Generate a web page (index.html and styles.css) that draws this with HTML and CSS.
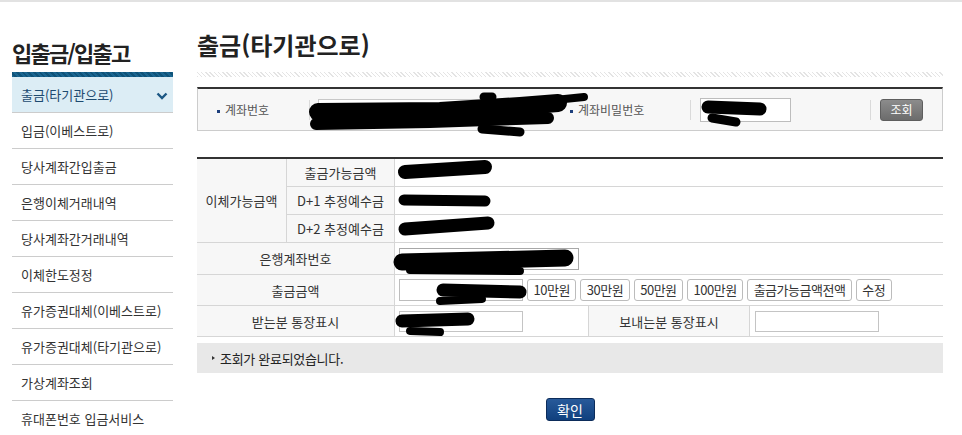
FILE: index.html
```html
<!DOCTYPE html>
<html lang="ko">
<head>
  <meta charset="UTF-8">
  <title>출금(타기관으로)</title>
  <link rel="stylesheet" href="styles.css">
</head>
<body>
  <div class="page">
    <div class="sidebar">
      <h2 class="side-title">입출금/입출고</h2>
      <div class="side-bar"></div>
      <ul class="menu">
        <li class="active">출금(타기관으로)
          <svg class="chev" width="12" height="8" viewBox="0 0 12 8"><path d="M1.5 1.5 L6 6 L10.5 1.5" fill="none" stroke="#1b5784" stroke-width="2.4"/></svg>
        </li>
        <li>입금(이베스트로)</li>
        <li>당사계좌간입출금</li>
        <li>은행이체거래내역</li>
        <li>당사계좌간거래내역</li>
        <li>이체한도정정</li>
        <li>유가증권대체(이베스트로)</li>
        <li>유가증권대체(타기관으로)</li>
        <li>가상계좌조회</li>
        <li>휴대폰번호 입금서비스</li>
      </ul>
    </div>

    <div class="main">
      <h1 class="title">출금(타기관으로)</h1>
      <div class="dots"></div>

      <div class="search-box">
        <span class="s-label first">계좌번호</span>
        <span class="s-div"></span>
        <input type="text" class="inp acct">
        <span class="s-label second">계좌비밀번호</span>
        <span class="s-div"></span>
        <input type="password" class="inp pw">
        <span class="s-div push"></span>
        <button class="btn-search">조회</button>
      </div>

      <div class="grid">
        <div class="c lbl span3">이체가능금액</div>
        <div class="c lbl sub">출금가능금액</div>
        <div class="c val wide"></div>
        <div class="c lbl sub">D+1 추정예수금</div>
        <div class="c val wide"></div>
        <div class="c lbl sub">D+2 추정예수금</div>
        <div class="c val wide"></div>

        <div class="c lbl both">은행계좌번호</div>
        <div class="c val wide">
          <div class="select">
            <svg width="9" height="7" viewBox="0 0 9 7"><path d="M1 1.5 L4.5 5 L8 1.5" fill="none" stroke="#000" stroke-width="1.6"/></svg>
          </div>
        </div>

        <div class="c lbl both">출금금액</div>
        <div class="c val wide">
          <input type="text" class="inp amount">
          <button class="btn-amt">10만원</button>
          <button class="btn-amt">30만원</button>
          <button class="btn-amt">50만원</button>
          <button class="btn-amt">100만원</button>
          <button class="btn-amt">출금가능금액전액</button>
          <button class="btn-amt">수정</button>
        </div>

        <div class="c lbl both">받는분 통장표시</div>
        <div class="c val"><input type="text" class="inp memo"></div>
        <div class="c lbl">보내는분 통장표시</div>
        <div class="c val last"><input type="text" class="inp memo"></div>
      </div>

      <div class="message"><span class="tri"></span>조회가 완료되었습니다.</div>

      <div class="actions">
        <button class="btn-ok">확인</button>
      </div>
    </div>
  </div>

  <!-- masked personal data in the original capture -->
  <svg class="mask" width="962" height="435" viewBox="0 0 962 435">
    <g fill="none" stroke="#000" stroke-linecap="round" stroke-linejoin="round">
      <path d="M318 112 L440 111 L520 106 L558 103" stroke-width="18"/>
      <path d="M545 101 L584 97" stroke-width="8"/>
      <path d="M316 124 L430 122 L548 118" stroke-width="12"/>
      <path d="M482 129 L520 132" stroke-width="9"/>
      <path d="M484 97 L492 97" stroke-width="9"/>
      <path d="M708 107 L760 109" stroke-width="13"/>
      <path d="M712 118 L736 122" stroke-width="9"/>
      <path d="M405 172 L485 167" stroke-width="14"/>
      <path d="M404 200 L485 201" stroke-width="11"/>
      <path d="M405 229 L488 223" stroke-width="13"/>
      <path d="M402 262 L565 258" stroke-width="17"/>
      <path d="M410 270 L520 271" stroke-width="8"/>
      <path d="M443 290 L520 292" stroke-width="13"/>
      <path d="M440 301 L482 299" stroke-width="8"/>
      <path d="M402 321 L468 319" stroke-width="13"/>
      <path d="M410 331 L440 332" stroke-width="8"/>
    </g>
  </svg>
</body>
</html>
```

FILE: styles.css
```css
body {
  margin: 0;
  border-top: 2px solid #e2e2e2;
  font-family: "Noto Sans CJK KR", "Noto Sans", sans-serif;
  color: #333;
  background: #fff;
  position: relative;
}
.page {
  display: flex;
  gap: 24px;
  padding-left: 12px;
}

/* sidebar */
.sidebar {
  width: 161px;
}
.side-title {
  margin: 35px 0 5px;
  font-size: 22px;
  line-height: 30px;
  letter-spacing: -1.8px;
  font-weight: bold;
  color: #222;
}
.side-bar {
  height: 5px;
  background: repeating-linear-gradient(45deg, #1a6590 0 2px, #0f5379 2px 4px);
}
.menu {
  list-style: none;
  margin: 0;
  padding: 0;
}
.menu li {
  height: 35px;
  line-height: 35px;
  border-bottom: 1px solid #cccccc;
  padding-left: 9px;
  font-size: 13px;
  color: #333;
  position: relative;
}
.menu li.active {
  background: #dcedf5;
  color: #1d4a70;
}
.chev {
  position: absolute;
  right: 5px;
  top: 15px;
}

/* main */
.main {
  width: 746px;
}
.title {
  margin: 28px 0 12px;
  font-size: 24px;
  line-height: 30px;
  font-weight: bold;
  color: #222;
}
.dots {
  height: 5px;
  background: repeating-linear-gradient(45deg, #e4e4e4 0 1px, #fff 1px 3px);
}

.search-box {
  margin-top: 10px;
  display: flex;
  align-items: center;
  height: 41px;
  background: #f7f7f7;
  border: 1px solid #cccccc;
  border-top: 2px solid #333;
  font-size: 12px;
}
.s-label {
  box-sizing: border-box;
  color: #555;
}
.s-label::before {
  content: "";
  display: inline-block;
  width: 3px;
  height: 3px;
  background: #1d3f7c;
  margin-right: 5px;
  vertical-align: middle;
}
.s-label.first {
  width: 111px;
  padding-left: 19px;
}
.s-label.second {
  width: 120px;
  margin-left: 22px;
}
.s-div {
  width: 1px;
  height: 20px;
  background: #dadada;
}
.s-div.push {
  margin-left: 79px;
}
.inp {
  box-sizing: border-box;
  border: 1px solid #bdbdbd;
  background: #fff;
  height: 22px;
  padding: 0 4px;
  font-family: inherit;
  font-size: 12px;
  margin: 0;
}
.inp.acct {
  margin-left: 8px;
  width: 230px;
  border-color: #c8c8c8;
}
.inp.pw {
  margin-left: 9px;
  width: 91px;
  height: 24px;
}
.btn-search {
  margin-left: 9px;
  width: 43px;
  height: 22px;
  padding: 0;
  border: 1px solid #5e5e5e;
  border-radius: 3px;
  background: linear-gradient(#8c8c8c, #6c6c6c);
  color: #fff;
  font-family: inherit;
  font-size: 12px;
}

/* form grid */
.grid {
  margin-top: 26px;
  display: grid;
  grid-template-columns: 90px 108px 194px 161px 193px;
  grid-template-rows: 28px 28px 28px 32px 31px 31px;
  border-top: 2px solid #333;
  font-size: 13px;
}
.c {
  box-sizing: border-box;
  border-bottom: 1px solid #d6d6d6;
  border-right: 1px solid #d6d6d6;
  display: flex;
  align-items: center;
}
.c.last,
.c.wide {
  border-right: none;
}
.lbl {
  justify-content: center;
  background: #f7f7f7;
  color: #333;
}
.span3 {
  grid-row: 1 / 4;
}
.both {
  grid-column: 1 / 3;
}
.wide {
  grid-column: 3 / 6;
}
.val {
  padding-left: 4px;
  gap: 4px;
}
.val.last {
  padding-left: 5px;
}
.select {
  box-sizing: border-box;
  width: 180px;
  height: 22px;
  border: 1px solid #a8a8a8;
  display: flex;
  align-items: center;
  justify-content: flex-end;
  padding-right: 5px;
}
.inp.amount {
  width: 124px;
}
.inp.memo {
  width: 124px;
  height: 21px;
  border-color: #c4c4c4;
}
.btn-amt {
  height: 22px;
  padding: 0 5.5px;
  border: 1px solid #bcbcbc;
  border-radius: 3px;
  background: #fff;
  color: #333;
  font-family: inherit;
  font-size: 13px;
  letter-spacing: -0.5px;
  line-height: 20px;
}

.message {
  margin-top: 6px;
  height: 30px;
  background: #e8e8e8;
  display: flex;
  align-items: center;
  padding-left: 15px;
  font-size: 13px;
  letter-spacing: -0.3px;
  color: #222;
}
.tri {
  width: 0;
  height: 0;
  border-left: 3px solid #333;
  border-top: 2.5px solid transparent;
  border-bottom: 2.5px solid transparent;
  margin-right: 5px;
}

.actions {
  margin-top: 25px;
  display: flex;
  justify-content: center;
}
.btn-ok {
  width: 49px;
  height: 23px;
  padding: 0;
  border: 1px solid #0c2c5a;
  border-radius: 3px;
  background: linear-gradient(#285a9a, #10407e);
  color: #fff;
  font-family: inherit;
  font-size: 14px;
}

.mask {
  position: absolute;
  left: 0;
  top: -2px;
  pointer-events: none;
}
```
